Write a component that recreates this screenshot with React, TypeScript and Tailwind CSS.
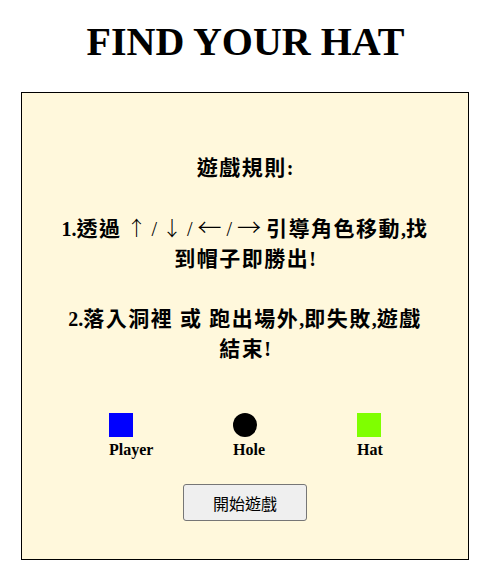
export default function App() {
  const serif = { fontFamily: '"Liberation Serif", "Times New Roman", "Noto Sans CJK TC", serif' }
  const arrow = { fontFamily: '"Noto Sans CJK TC", sans-serif' }
  const cjk = 'text-[21px] tracking-[1.5px]'
  return (
    <div className="min-h-[582px] bg-white text-black" style={serif}>
      <h1 className="pt-[20px] text-center text-[40px] font-bold leading-[44px]">FIND YOUR HAT</h1>
      <div className="ml-[21px] mr-[22px] mt-[28px] border border-black bg-[#fff8dc] px-[36px] pt-[40px] pb-[38px]">
        <p className="mt-[20px] whitespace-nowrap text-center text-[20px] font-bold leading-[30px]">
          <span className={cjk}>遊戲規則</span>:
          <br />
          <br />
          1.<span className={cjk}>透過</span>{' '}
          <span className="font-extralight">
            <span style={arrow}>↑</span> / <span style={arrow}>↓</span> /{' '}
            <span className="text-[24px] leading-[0]" style={arrow}>←</span> /{' '}
            <span className="text-[24px] leading-[0]" style={arrow}>→</span>
          </span>{' '}
          <span className={cjk}>引導角色移動</span>,<span className={cjk}>找</span>
          <br />
          <span className={cjk}>到帽子即勝出</span>!
          <br />
          <br />
          2.<span className={cjk}>落入洞裡 或 跑出場外</span>,<span className={cjk}>即失敗</span>,
          <span className={cjk}>遊戲</span>
          <br />
          <span className={cjk}>結束</span>!
        </p>
        <div className="mt-[49px] flex justify-center gap-[100px]">
          <div className="w-6">
            <div className="h-6 w-6 bg-[#0000ff]" />
            <div className="whitespace-nowrap text-[16px] font-bold leading-[26px]">Player</div>
          </div>
          <div className="w-6">
            <div className="h-6 w-6 rounded-full bg-black" />
            <div className="whitespace-nowrap text-[16px] font-bold leading-[26px]">Hole</div>
          </div>
          <div className="w-6">
            <div className="h-6 w-6 bg-[#7fff00]" />
            <div className="whitespace-nowrap text-[16px] font-bold leading-[26px]">Hat</div>
          </div>
        </div>
        <div className="mt-[21px] flex justify-center">
          <button
            className="h-[37px] w-[124px] rounded-[3px] border border-[#767676] bg-[#efefef] text-[16px] text-black"
            style={{ fontFamily: '"Noto Sans CJK TC", sans-serif' }}
          >
            開始遊戲
          </button>
        </div>
      </div>
    </div>
  )
}
